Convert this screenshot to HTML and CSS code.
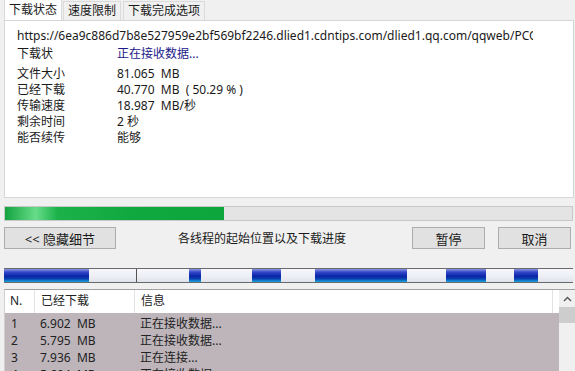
FILE: index.html
```html
<!DOCTYPE html>
<html lang="zh-CN">
<head>
    <meta charset="UTF-8">
    <title>下载状态</title>
    <link rel="stylesheet" href="styles.css">
</head>
<body>
    <div class="tabs">
        <div class="tab active">下载状态</div>
        <div class="tab">速度限制</div>
        <div class="tab">下载完成选项</div>
    </div>

    <div class="panel">
        <div class="url">https://6ea9c886d7b8e527959e2bf569bf2246.dlied1.cdntips.com/dlied1.qq.com/qqweb/PCQQ/PCQQ_EXE/PCQQ2021.exe</div>
        <div class="info-row status">
            <span class="label">下载状</span>
            <span class="value blue">正在接收数据...</span>
        </div>
        <div class="info-list">
            <div class="info-row"><span class="label">文件大小</span><span class="value">81.065&nbsp; MB</span></div>
            <div class="info-row"><span class="label">已经下载</span><span class="value">40.770&nbsp; MB&nbsp; (&nbsp;50.29 %&nbsp;)</span></div>
            <div class="info-row"><span class="label">传输速度</span><span class="value">18.987&nbsp; MB/秒</span></div>
            <div class="info-row"><span class="label">剩余时间</span><span class="value">2 秒</span></div>
            <div class="info-row"><span class="label">能否续传</span><span class="value">能够</span></div>
        </div>
    </div>

    <div class="progress">
        <div class="progress-fill" style="width: 38.7%"></div>
    </div>

    <div class="actions">
        <button class="btn btn-wide">&lt;&lt; 隐藏细节</button>
        <span class="caption">各线程的起始位置以及下载进度</span>
        <button class="btn">暂停</button>
        <button class="btn">取消</button>
    </div>

    <div class="segments">
        <div class="seg done" style="width: 85px"></div>
        <div class="seg" style="width: 47px"></div>
        <div class="seg split" style="width: 52px"></div>
        <div class="seg done" style="width: 12px"></div>
        <div class="seg" style="width: 51px"></div>
        <div class="seg done" style="width: 29px"></div>
        <div class="seg" style="width: 34px"></div>
        <div class="seg done" style="width: 92px"></div>
        <div class="seg" style="width: 39px"></div>
        <div class="seg done" style="width: 40px"></div>
        <div class="seg" style="width: 28px"></div>
        <div class="seg done" style="width: 24px"></div>
        <div class="seg fill"></div>
    </div>

    <div class="threads">
        <div class="table">
            <div class="row head">
                <span class="col-n">N.</span>
                <span class="col-size">已经下载</span>
                <span class="col-info">信息</span>
            </div>
            <div class="row"><span class="col-n">1</span><span class="col-size">6.902&nbsp; MB</span><span class="col-info">正在接收数据...</span></div>
            <div class="row"><span class="col-n">2</span><span class="col-size">5.795&nbsp; MB</span><span class="col-info">正在接收数据...</span></div>
            <div class="row"><span class="col-n">3</span><span class="col-size">7.936&nbsp; MB</span><span class="col-info">正在连接...</span></div>
            <div class="row"><span class="col-n">4</span><span class="col-size">5.604&nbsp; MB</span><span class="col-info">正在接收数据...</span></div>
        </div>
        <div class="scrollbar">
            <div class="arrow">
                <svg width="9" height="6" viewBox="0 0 9 6"><path d="M1 5 L4.5 1.5 L8 5" fill="none" stroke="#555" stroke-width="1.4"/></svg>
            </div>
            <div class="thumb"></div>
        </div>
    </div>
</body>
</html>
```

FILE: styles.css
```css
:root {
    --bg-color: #f0f0f0;
    --border-color: #d6d6d6;
    --text-color: #1a1a1a;
    --row-color: #bdb5ba;
}

body {
    margin: 0;
    background: var(--bg-color);
    color: var(--text-color);
    font-family: "Noto Sans", "Noto Sans CJK SC", sans-serif;
    font-size: 12px;
    overflow: hidden;
}

.tabs {
    display: flex;
    height: 20px;
    padding-left: 4px;
    align-items: flex-end;
}

.tab {
    height: 18px;
    line-height: 18px;
    padding: 0 4px;
    font-size: 12px;
    border: 1px solid #dadada;
    border-bottom: none;
    margin-right: 2px;
    background: #f0f0f0;
}

.tab.active {
    height: 20px;
    line-height: 19px;
    background: #fff;
    margin-right: 1px;
}

.panel {
    height: 178px;
    margin: 0 1px 0 4px;
    padding: 0 40px 0 12px;
    background: #fff;
    border: 1px solid var(--border-color);
    box-sizing: border-box;
}

.url {
    margin-top: 6px;
    height: 17px;
    line-height: 17px;
    white-space: nowrap;
    overflow: hidden;
}

.info-row {
    display: flex;
    height: 16px;
    line-height: 16px;
}

.status {
    margin-top: 2px;
}

.info-list {
    margin-top: 4px;
}

.label {
    width: 100px;
}

.blue {
    color: #1c1a8a;
}

.progress {
    height: 15px;
    margin: 8px 2px 0 4px;
    background: #e4e4e4;
    border: 1px solid #c8c8c8;
    box-sizing: border-box;
}

.progress-fill {
    height: 100%;
    background: linear-gradient(90deg, #13a33f 0%, #67dc8a 14%, #1bb24a 24%, #0fa83e 60%, #0da63c 100%);
}

.actions {
    display: flex;
    align-items: center;
    height: 22px;
    margin: 6px 4px 0 4px;
}

.btn {
    height: 22px;
    width: 73px;
    padding: 0;
    font-family: inherit;
    font-size: 13px;
    color: var(--text-color);
    background: #e1e1e1;
    border: 1px solid #adadad;
}

.btn-wide {
    width: 112px;
}

.caption {
    flex: 1;
    text-align: center;
    font-size: 12px;
    padding-right: 4px;
}

.actions .btn + .btn {
    margin-left: 13px;
}

.segments {
    display: flex;
    height: 15px;
    margin: 19px 2px 0 4px;
    border-top: 1px solid #6a6a6a;
    border-bottom: 1px solid #6a6a6a;
    box-sizing: border-box;
}

.seg {
    height: 100%;
    background: linear-gradient(180deg, #f7f7fb 0%, #eceef4 60%, #dfe2ea 100%);
}

.seg.fill {
    flex: 1;
}

.seg.split {
    border-left: 1px solid #555;
}

.seg.done {
    background: linear-gradient(180deg, #8c95e4 0%, #3146c9 25%, #0a24a6 55%, #0a3fb0 75%, #1aa8dc 100%);
}

.threads {
    display: flex;
    height: 90px;
    margin: 6px 0 0 4px;
    border-top: 1px solid #a0a0a0;
    border-left: 1px solid #d0d0d0;
    background: #fff;
}

.table {
    flex: 1;
}

.row {
    display: flex;
    height: 17px;
    line-height: 17px;
    background: var(--row-color);
    color: #222;
}

.row.head {
    height: 23px;
    line-height: 22px;
    background: #fff;
    margin-right: 6px;
    font-size: 12px;
}

.row.head span {
    border-right: 1px solid #e3e3e3;
}

.col-n {
    width: 29px;
    padding-left: 6px;
    box-sizing: border-box;
}

.head .col-n {
    width: 30px;
    padding-left: 5px;
}

.col-size {
    width: 100px;
    padding-left: 6px;
    box-sizing: border-box;
}

.col-info {
    flex: 1;
    padding-left: 6px;
}

.head + .row {
    padding-top: 2px;
}

.scrollbar {
    width: 16px;
    background: #f0f0f0;
}

.arrow {
    height: 17px;
    display: flex;
    align-items: center;
    justify-content: center;
}

.thumb {
    height: 16px;
    background: #cdcdcd;
}
```
